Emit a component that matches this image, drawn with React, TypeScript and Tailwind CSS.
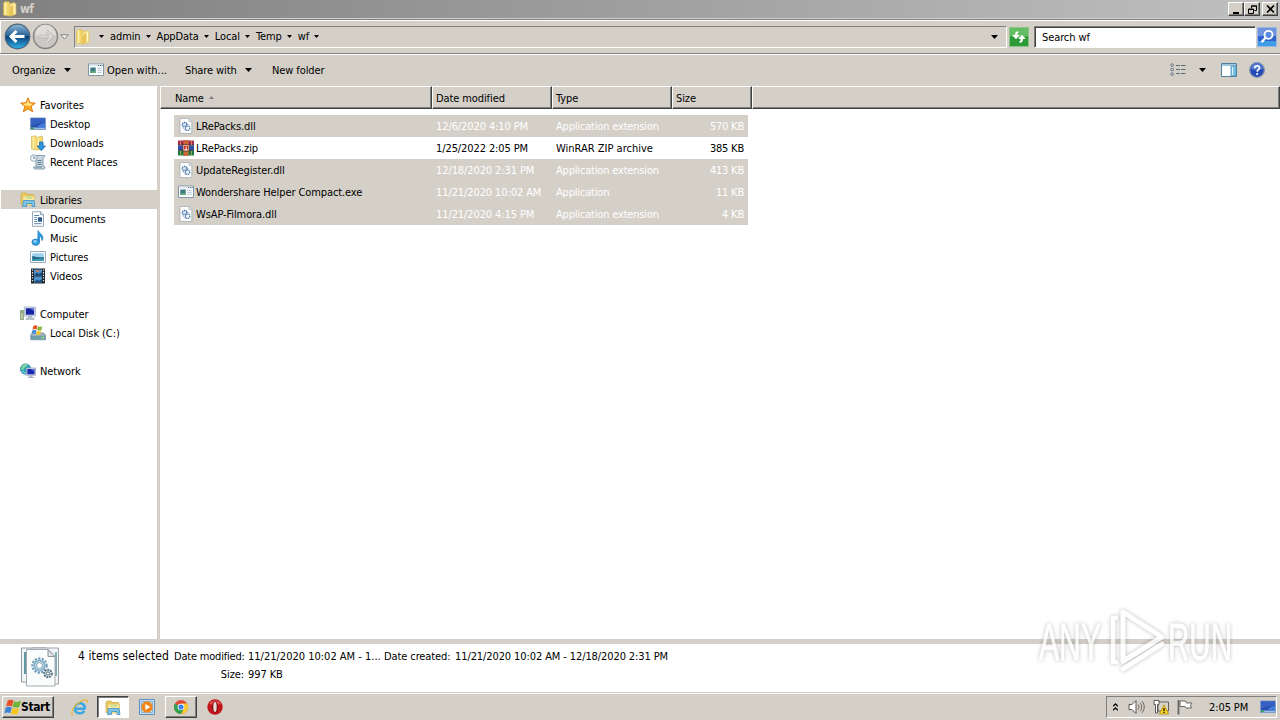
import type { ReactNode } from "react";
import clsx from "clsx";

type IconProps = { className?: string };

type FileRow = {
  name: string;
  date: string;
  type: string;
  size: string;
  icon: ReactNode;
  selected: boolean;
};

type TreeItem = {
  label: string;
  icon: ReactNode;
  root?: boolean;
  active?: boolean;
};

const RAISED =
  "border border-t-white border-l-white border-r-[#404040] border-b-[#404040] shadow-[inset_-1px_-1px_0_#808080]";

/* ---------- Icons ---------- */

function Svg({ className = "size-4", box = "0 0 16 16", children }: IconProps & { box?: string; children: ReactNode }) {
  return (
    <svg className={clsx("block shrink-0", className)} viewBox={box} fill="none">
      {children}
    </svg>
  );
}

function Caret({ className = "h-1 w-[7px]" }: IconProps) {
  return (
    <Svg className={className} box="0 0 7 4">
      <path d="M0 0h7L3.5 4z" fill="#000" />
    </Svg>
  );
}

function FolderIcon({ className }: IconProps) {
  return (
    <Svg className={className}>
      <path d="M1.5 2 3 .8h4l1 1.5V14l-1 1-5.5-1z" fill="#f1d66c" stroke="#d9b54c" strokeWidth=".6" />
      <path d="M3.5 1.5v12.8" stroke="#fff3b4" strokeWidth="1.6" />
      <path d="m7 3.5 4.5-2 2.5 1.2v10.5L8 15.3z" fill="#f8e392" stroke="#dcb850" strokeWidth=".6" />
      <path d="m8 15 .2-9 3-2v9z" fill="#e7c455" />
      <path d="M12.5 3v10" stroke="#fff8cd" />
    </Svg>
  );
}

function StarIcon() {
  return (
    <Svg>
      <path
        d="m8 .8 2 4.9 5.3.4-4.1 3.3 1.5 5.4L8 11.9l-4.7 2.9 1.5-5.4L.7 6.1 6 5.7z"
        fill="#fbab22"
        stroke="#df7d18"
        strokeLinejoin="round"
      />
      <path d="m8 2.8 1.2 3.6 3.8.4-3 2.2L8 8.5 4 8.2 3 6.8l3.8-.4z" fill="#ffe685" />
    </Svg>
  );
}

function DesktopIcon() {
  return (
    <Svg>
      <path d="M.5 2h15v11.5H.5z" fill="#274fae" stroke="#7e9cc4" />
      <path d="M1 2.5h14v4C10 6 6 8 1 10z" fill="#3561c4" />
      <path d="M1 11.5h14V13H1z" fill="#9fbde0" />
      <path d="M1 11.5h3V13H1z" fill="#36a552" />
      <path d="M8 10c2-2 4-3 7-3v4.5H8z" fill="#3f7bd8" />
    </Svg>
  );
}

function DownloadsIcon() {
  return (
    <Svg>
      <path d="M1.5 1.5 6 .8l1 1.7 5-1.5.5 1v12L7 15l-5.5-1z" fill="#f4d976" stroke="#d5b452" strokeWidth=".7" />
      <path d="M3.5 1.5v12M8.5 3v9" stroke="#fff1ae" strokeWidth="1.3" />
      <path d="M9.5 7h3.6v4H15.5l-4.2 4.7L7 11h2.5z" fill="#2b94dc" stroke="#1768ad" strokeWidth=".7" />
    </Svg>
  );
}

function RecentIcon() {
  return (
    <Svg>
      <path d="M5 1.5h9.5c.5 2-1.5 2-1.5 3.5v7l2 1c0 2-1 2-2 2H5c-1 0-1.5-1-1.5-2H6V5z" fill="#c9d7e0" stroke="#7a91a2" strokeWidth=".9" />
      <path d="M7.5 6.5h4M7.5 8.5h4M7.5 10.5h4M6 13h6" stroke="#5f7f99" />
      <circle cx="3.8" cy="4" r="3.3" fill="#eef4f7" stroke="#8499a8" strokeWidth=".8" />
      <path d="M3.8 2v2.2h2" stroke="#55768f" strokeWidth=".8" />
    </Svg>
  );
}

function LibrariesIcon({ className }: IconProps) {
  return (
    <Svg className={className}>
      <path d="M1 2.5 2 1h4l1 1.5h6.5v10H1z" fill="#eccc62" stroke="#cda741" strokeWidth=".7" />
      <path d="M3 4h11.5v9H2z" fill="#fbe89c" stroke="#d9b752" strokeWidth=".7" />
      <path d="M6 4.8h6.5v2H6z" fill="#bfe09c" />
      <path d="M3.5 8.5H14l1 6h-3v-3H6.5v3h-4z" fill="#7fc4ea" stroke="#3c8fc4" strokeWidth=".8" />
    </Svg>
  );
}

function DocumentIcon() {
  return (
    <Svg>
      <path d="M2.5.7h8l3 3v11.6h-11z" fill="#fff" stroke="#7e93a8" strokeWidth=".8" />
      <path d="M10.5.7v3h3" fill="#d5e0ea" stroke="#7e93a8" strokeWidth=".8" />
      <path d="M4.2 4.5h5M4.2 6.5h3M4.2 8.5h3M4.2 10.5h3M4.2 12.7h7.5" stroke="#5b87ad" />
      <path d="M8 6.3h4v4.4H8z" fill="#285b8d" />
    </Svg>
  );
}

function MusicIcon() {
  return (
    <Svg>
      <path d="M8 .3c.6 3 5.3 3.8 5 8-.1 1-.6 1.900-1.200 2.300.3-2.800-1.200-3.800-2.300-4.100V12H7.700z" fill="#2f9ee0" stroke="#1c74ba" strokeWidth=".6" />
      <ellipse cx="5.700" cy="12.200" rx="3.800" ry="3.100" fill="#38a4e4" stroke="#1b6eb2" strokeWidth=".7" />
      <ellipse cx="5" cy="11.300" rx="1.700" ry="1.100" fill="#a8dbf7" />
    </Svg>
  );
}

function PicturesIcon() {
  return (
    <Svg>
      <path d="M.5 2.5h15v11H.5z" fill="#fff" stroke="#8fa3b4" strokeWidth=".9" />
      <path d="M2.2 4.2h11.6v7.6H2.2z" fill="#9dd2ef" />
      <path d="M2.2 7c3 0 5 2 11.6 1v3.8H2.2z" fill="#246c86" />
      <path d="M2.2 10.5c4 0 8-1 11.6-1v2.3H2.2z" fill="#3fa0be" />
    </Svg>
  );
}

function VideosIcon() {
  return (
    <Svg>
      <path d="M1 .5h14v15H1z" fill="#1d252c" />
      <path d="M4 1.5h8v6H4zM4 8.5h8v6H4z" fill="#4a93cc" />
      <path d="m4 7.5 3-3 2 1.5L12 4v3.5zM4 14.5l3-3 2 1.5 3-2v3.5z" fill="#1c4b77" />
      <path d="M6 2.5h3v1.5H6z" fill="#df7248" />
      <path d="M2.5 1.5v13M13.5 1.5v13" stroke="#dfe6eb" strokeWidth="1.2" strokeDasharray="1.3 1.3" />
    </Svg>
  );
}

function ComputerIcon() {
  return (
    <Svg>
      <path d="M.5 4.5h3v9h-3z" fill="#b9c9a5" stroke="#77876c" strokeWidth=".7" />
      <path d="M1 6h2" stroke="#47a137" />
      <path d="M4.3 1h11.2v9H4.3z" fill="#d9e0ea" stroke="#9ba8ba" strokeWidth=".7" />
      <path d="M5.8 2.3h8.3v6.4H5.8z" fill="#1522a4" />
      <path d="M9.5 2.3h4.6v3z" fill="#5a72e1" />
      <path d="M8.5 10h3v2H14v1.5H6V12h2.5z" fill="#b6c1cd" stroke="#8693a3" strokeWidth=".4" />
    </Svg>
  );
}

function DriveIcon() {
  return (
    <Svg>
      <path d="m.7 10 2-2h11l1.8 2v4.8H.7z" fill="#a7b6c0" stroke="#6e818c" strokeWidth=".7" />
      <path d="M1 10.7h14v3.8H1z" fill="#6f9fab" />
      <path d="M11.500 12.500H14" stroke="#8bf26a" strokeWidth="1.2" />
      <path d="M3.300.9c1.500-1 3-1 4.200 0L6.700 4.600c-1-.8-2.700-.8-4.200 0z" fill="#e8562a" />
      <path d="M8 1.200c1.300.9 2.800.9 4.400 0l-1 3.700c-1.300.8-2.700.8-4.200 0z" fill="#7fb83b" />
      <path d="M2.300 5.300c1.400-.8 2.900-.8 4.200 0L5.600 9c-1-.8-2.700-.8-4.200 0z" fill="#4f8fd8" />
      <path d="M7 5.600c1.300.8 2.700.8 4.300 0l-1 3.700c-1.400.8-2.800.8-4.200 0z" fill="#f6c62e" />
    </Svg>
  );
}

function NetworkIcon() {
  return (
    <Svg>
      <circle cx="5.6" cy="6" r="5.2" fill="#2aa0b8" stroke="#237897" strokeWidth=".6" />
      <path d="M2 3c2-2 5-2.300 6-1.500C7 4 4 4 3.500 6.500c-1 1-2 0-2.600-.8z" fill="#7fd6a0" />
      <path d="M2 8.500c2 0 3 .5 3.300 2.300" stroke="#a3e6f0" />
      <path d="M6.300 5h9.200v7.300H6.300z" fill="#d9e0ea" stroke="#8b9bb4" strokeWidth=".7" />
      <path d="M7.300 6h7.200v5.300H7.300z" fill="#1726ad" />
      <path d="M10.500 6h4v2.700z" fill="#5a74e5" />
      <path d="M9.800 12.300h2.400v1.500h2v1.300H7.800v-1.300h2z" fill="#aab6c6" />
    </Svg>
  );
}

function DllIcon() {
  return (
    <Svg>
      <path d="M2 .5h9l2.800 2.800v12.200H2z" fill="#fff" stroke="#a6afb6" strokeWidth=".8" />
      <path d="M11 .5v2.800h2.800" stroke="#a6afb6" strokeWidth=".8" />
      <circle cx="6.600" cy="6.600" r="2.300" stroke="#3f6ea6" strokeWidth="1.300" strokeDasharray="1.300 .5" />
      <circle cx="6.600" cy="6.600" r=".9" stroke="#7ea2cc" strokeWidth=".6" />
      <circle cx="9.600" cy="10.200" r="2.200" stroke="#3f6ea6" strokeWidth="1.200" strokeDasharray="1.200 .5" />
      <path d="m4.500 9.500 3.500 3.500M9 5.500l2.500 2" stroke="#89a8cd" strokeWidth=".7" />
    </Svg>
  );
}

function ZipIcon() {
  return (
    <Svg>
      <path d="M0 .5h16V5H0z" fill="#a82b4c" />
      <path d="M0 5.5h16v4.700H0z" fill="#2d4fa8" />
      <path d="M0 10.700h16v4.800H0z" fill="#207a3c" />
      <path d="M0 5h16M0 10.400h16" stroke="#241f35" strokeWidth=".8" />
      <path d="M5.500 0h5v16h-5z" fill="#c9693a" />
      <path d="M5 4.500h6v6.500H5z" fill="#efe6dc" stroke="#6c351e" strokeWidth=".8" />
      <path d="M6.500 9.500V6h1.300v3M9.500 9.500V6H8" stroke="#d02c1f" />
      <path d="M2.500 1v4M13.500 1v4M2.500 11v4M13.500 11v4" stroke="#e9c56a" strokeWidth=".6" />
    </Svg>
  );
}

function AppIcon({ className }: IconProps) {
  return (
    <Svg className={className}>
      <path d="M.5 2h15v11.500H.5z" fill="#fff" stroke="#8197a8" />
      <path d="M1 2.500h14v1.900H1z" fill="#dce6ed" />
      <path d="M10 3.500h1M12 3.500h1M13.700 3.500h1" stroke="#567" />
      <path d="M2.300 5.500h5.400V11H2.300z" fill="#3f7b82" />
      <path d="M2.300 9.200h5.400V11H2.300z" fill="#63ae7d" />
      <path d="M9.300 6.300h4.500M9.300 8.300h4.500M9.300 10.300h4.500" stroke="#b4c5d2" />
    </Svg>
  );
}

function GearFilesIcon() {
  return (
    <Svg className="h-[42px] w-[40px]" box="0 0 40 42">
      <path d="M1.500 2h25v34h-25z" fill="#f2f5f6" stroke="#8f999f" />
      <path d="M4 6h3.500v22H4z" fill="#5f97a3" />
      <path d="M12 2h26.500v36H12z" fill="#f2f5f6" stroke="#9aa3a8" />
      <path d="M35 6h2v24h-2z" fill="#83adb6" />
      <path d="M6.500 3.500H28l7 7V40H6.500z" fill="#fbfcfc" stroke="#a3abb0" />
      <path d="M28 3.500v7h7z" fill="#dde3e6" stroke="#8b959b" />
      <circle cx="19.500" cy="19.500" r="7.200" stroke="#6f9bb8" strokeWidth="2" strokeDasharray="2.200 1.400" />
      <circle cx="19.500" cy="19.500" r="5.200" fill="#dcebf3" stroke="#86afc6" strokeWidth="2" />
      <circle cx="19.500" cy="19.500" r="3" fill="#fff" stroke="#4f86a9" strokeWidth=".8" />
      <circle cx="28" cy="27.500" r="3.800" fill="#d4e3ea" stroke="#51707f" strokeWidth="2" strokeDasharray="1.800 1" />
      <circle cx="28" cy="27.500" r="1.600" fill="#fff" stroke="#51707f" />
    </Svg>
  );
}

function BackButton() {
  return (
    <Svg className="size-[27px]" box="0 0 27 27">
      <defs>
        <linearGradient id="back" x1="0" y1="0" x2="0" y2="1">
          <stop stopColor="#8fb7d6" />
          <stop offset=".48" stopColor="#246298" />
          <stop offset=".5" stopColor="#0c4079" />
          <stop offset="1" stopColor="#2fb3ec" />
        </linearGradient>
      </defs>
      <circle cx="13.500" cy="13.500" r="12.300" fill="url(#back)" stroke="#4d6479" strokeWidth="1.200" />
      <path d="M12.500 8 7 13.500l5.500 5.500M7.500 13.500h13" stroke="#fff" strokeWidth="3" />
    </Svg>
  );
}

function ForwardButton() {
  return (
    <Svg className="size-[27px]" box="0 0 27 27">
      <circle cx="13.500" cy="13.500" r="12" fill="#cbc9c6" stroke="#858380" strokeWidth="1.400" />
      <path d="M3 12a10.500 10.500 0 0 1 21 0c-6 2-14 2-21 0z" fill="#dfddda" />
      <path d="m14.500 8 5.500 5.500-5.500 5.500M19.500 13.500h-13" stroke="#b5b2ae" strokeWidth="3.400" />
      <path d="m14.500 8 5.500 5.500-5.500 5.500M19.500 13.500h-13" stroke="#dcdad7" strokeWidth="2" />
    </Svg>
  );
}

function RefreshIcon() {
  return (
    <Svg className="size-5" box="0 0 20 20">
      <path d="M.5.5h19v19H.5z" fill="#2c9a36" stroke="#8cc48b" />
      <path d="M1 1h18v8c-6 2-12 2-18 0z" fill="#63bd62" />
      <path d="M9.500 4.200C6.500 4.200 6 6 6 8H3.200L7 12.300 10.800 8H8.500c0-1.500 0-2 1-2.200z" fill="#fff" />
      <path d="M10.500 15.800c3 0 3.500-1.800 3.500-3.800h2.800L13 7.700 9.200 12h2.300c0 1.500 0 2-1 2.200z" fill="#fff" />
    </Svg>
  );
}

function SearchIcon() {
  return (
    <Svg className="size-5" box="0 0 20 20">
      <path d="M.5.5h19v19H.5z" fill="#2f62cd" stroke="#9db6e4" />
      <path d="M1 1h18v8H1z" fill="#6f93de" />
      <path d="M1 14h18v5H1z" fill="#3f9de6" />
      <circle cx="11.500" cy="7.800" r="4" fill="#5b8be0" stroke="#fff" strokeWidth="1.800" />
      <path d="m8.600 10.800-4 4.400" stroke="#fff" strokeWidth="2.400" />
    </Svg>
  );
}

function ViewIcon() {
  return (
    <Svg>
      <path d="M1 2h2.200v2.200H1zM1 6.500h2.200v2.200H1zM1 11h2.200v2.200H1z" fill="#fff" stroke="#6d767e" />
      <path d="M6 3.500h4M11 3.500h4.500M6 7.500h4M11 7.500h4.500M6 11.500h4M11 11.500h4.500" stroke="#5f6b76" />
    </Svg>
  );
}

function PreviewPaneIcon() {
  return (
    <Svg>
      <path d="M.5 1.500h15v13H.5z" fill="#fff" stroke="#4f7fa1" />
      <path d="M1 2h14v2H1z" fill="#9fc6dc" />
      <path d="M10 4h5v10h-5z" fill="#7cc3e4" stroke="#4f8fb3" strokeWidth=".8" />
      <path d="M11.500 5v8" stroke="#d9f1fb" />
    </Svg>
  );
}

function HelpIcon() {
  return (
    <Svg>
      <circle cx="8" cy="8" r="7.300" fill="#2349b5" stroke="#7e8fae" strokeWidth="1.300" />
      <path d="M2 7a6 6 0 0 1 12 0c-4 1.500-8 1.500-12 0z" fill="#5378d2" />
      <path d="M5.700 6.200c0-3 4.800-3 4.800-.2 0 1.700-2.300 1.700-2.300 3.700" stroke="#fff" strokeWidth="1.700" />
      <circle cx="8.200" cy="12" r="1.100" fill="#fff" />
    </Svg>
  );
}

function WindowsFlag() {
  return (
    <Svg className="size-[17px]">
      <path d="M3.500 1.500c2-1.200 4-1 5.500 0L7.500 7C6 6 4 6 2 7z" fill="#e65127" />
      <path d="M9.500 2c1.800 1 4 1 6.500-.3L14.500 7.200c-2 1.100-4.200 1.100-6.300.2z" fill="#6fb536" />
      <path d="M1.700 8c2-1 4-1 5.600 0L5.900 13.400c-1.500-1-3.700-1-5.600 0z" fill="#3e83d6" />
      <path d="M8 8.400c2 1 4.200 1 6.300-.1l-1.500 5.500c-2 1.100-4.300 1.100-6.200.1z" fill="#f8c520" />
    </Svg>
  );
}

function IeIcon() {
  return (
    <Svg className="size-[17px]">
      <path
        d="M13.300 9.200H3.600c0 4.800 7 5.600 8.800 1.800M13.200 9.200c.3-6.700-9.400-7-9.600 0"
        stroke="#3ba7e4"
        strokeWidth="2.400"
      />
      <path d="M1.500 15.200C-.7 12.500 3 5.500 8.500 2.500c3.500-2 6.700-2.300 6.900-.8.1.7 0 1.300-.4 2" stroke="#e9b93a" strokeWidth="1.200" />
    </Svg>
  );
}

function MediaIcon() {
  return (
    <Svg className="size-4">
      <path d="M.5.5h15v15H.5z" fill="#c5dcf0" stroke="#5b91c0" />
      <path d="M2.500 2.500h11v11h-11z" stroke="#8bb4d8" />
      <circle cx="8" cy="8" r="5.700" fill="#f1861b" />
      <path d="m6.300 5 5 3-5 3z" fill="#fff" />
    </Svg>
  );
}

function ChromeIcon() {
  return (
    <Svg className="size-[14px]">
      <circle cx="8" cy="8" r="8" fill="#e24a3b" />
      <path d="M8 8 1.100 4A8 8 0 0 0 8 16l3.500-6z" fill="#2ea34f" />
      <path d="M8 16a8 8 0 0 0 7-12H8l3.500 6z" fill="#f9cb2d" />
      <circle cx="8" cy="8" r="3.800" fill="#fff" />
      <circle cx="8" cy="8" r="2.900" fill="#3f7fe8" />
    </Svg>
  );
}

function OperaIcon() {
  return (
    <Svg className="size-4">
      <circle cx="8" cy="8" r="7.700" fill="#c3161c" />
      <path d="M2 5a7 7 0 0 1 12 0c-3 1-8 1-12 0z" fill="#dd5250" />
      <ellipse cx="8" cy="8" rx="3" ry="5.800" fill="#7e0b10" />
      <ellipse cx="8" cy="8" rx="1.700" ry="5" fill="#e9dcd6" />
    </Svg>
  );
}

function SpeakerIcon() {
  return (
    <Svg className="h-4 w-[17px]" box="0 0 17 16">
      <path d="M1 5.500h3l4-4v13l-4-4H1z" fill="#fff" stroke="#57534f" />
      <path d="M10 5.500c1.300 1.500 1.300 3.500 0 5M12 3.800c2.300 2.500 2.300 6 0 8.500M14 2.200c3 3.500 3 8 0 11.500" stroke="#6b6762" />
    </Svg>
  );
}

function NetTrayIcon() {
  return (
    <Svg className="size-4">
      <path d="M5 3h10.500v9H5z" fill="#d8d4ce" stroke="#625e59" />
      <path d="M1 1.500h5v4H4.500V14h-2V5.500H1z" fill="#fff" stroke="#4b4844" strokeWidth=".9" />
      <path d="M11 5.800 15.700 15H6.300z" fill="#fbd326" stroke="#b28d0e" strokeWidth=".8" />
      <path d="M11 9v3M11 12.800v1.200" stroke="#000" strokeWidth="1.200" />
    </Svg>
  );
}

function FlagIcon() {
  return (
    <Svg className="size-4">
      <path d="M1.500 1v14.500" stroke="#66625d" strokeWidth="1.800" />
      <path d="M3 2h5.500l1 2H15l-1.500 2.500L14.500 9H9L8 7.500H3z" fill="#fff" stroke="#6b6762" />
    </Svg>
  );
}

/* ---------- Data ---------- */

const PATH = ["admin", "AppData", "Local", "Temp", "wf"];

const TREE: TreeItem[][] = [
  [
    { label: "Favorites", icon: <StarIcon />, root: true },
    { label: "Desktop", icon: <DesktopIcon /> },
    { label: "Downloads", icon: <DownloadsIcon /> },
    { label: "Recent Places", icon: <RecentIcon /> },
  ],
  [
    { label: "Libraries", icon: <LibrariesIcon />, root: true, active: true },
    { label: "Documents", icon: <DocumentIcon /> },
    { label: "Music", icon: <MusicIcon /> },
    { label: "Pictures", icon: <PicturesIcon /> },
    { label: "Videos", icon: <VideosIcon /> },
  ],
  [
    { label: "Computer", icon: <ComputerIcon />, root: true },
    { label: "Local Disk (C:)", icon: <DriveIcon /> },
  ],
  [{ label: "Network", icon: <NetworkIcon />, root: true }],
];

const FILES: FileRow[] = [
  { name: "LRePacks.dll", date: "12/6/2020 4:10 PM", type: "Application extension", size: "570 KB", icon: <DllIcon />, selected: true },
  { name: "LRePacks.zip", date: "1/25/2022 2:05 PM", type: "WinRAR ZIP archive", size: "385 KB", icon: <ZipIcon />, selected: false },
  { name: "UpdateRegister.dll", date: "12/18/2020 2:31 PM", type: "Application extension", size: "413 KB", icon: <DllIcon />, selected: true },
  { name: "Wondershare Helper Compact.exe", date: "11/21/2020 10:02 AM", type: "Application", size: "11 KB", icon: <AppIcon />, selected: true },
  { name: "WsAP-Filmora.dll", date: "11/21/2020 4:15 PM", type: "Application extension", size: "4 KB", icon: <DllIcon />, selected: true },
];

/* ---------- Sections ---------- */

function TitleBar() {
  const button = clsx("flex h-[14px] w-4 items-center justify-center bg-[#d4d0c8]", RAISED);
  return (
    <div className="flex h-[18px] items-center bg-linear-to-r from-[#808080] to-[#c0c0c0] px-[2px]">
      <FolderIcon className="size-4" />
      <span className="ml-[2px] text-[12px] font-bold tracking-[-0.7px] text-[#d4d0c8]">wf</span>
      <div className="ml-auto flex">
        <div className={button}>
          <Svg className="size-[9px]" box="0 0 9 9">
            <path d="M1 7h6v2H1z" fill="#000" />
          </Svg>
        </div>
        <div className={button}>
          <Svg className="size-[9px]" box="0 0 9 9">
            <path d="M3.500 3V1h5v4.500H6.500M3 1h6M.5 4h5v4.500h-5zM0 4.500h6" stroke="#000" />
          </Svg>
        </div>
        <div className={clsx(button, "ml-[2px]")}>
          <Svg className="h-[8px] w-[9px]" box="0 0 9 8">
            <path d="m1 .5 7 7M8 .5l-7 7" stroke="#000" strokeWidth="1.600" />
          </Svg>
        </div>
      </div>
    </div>
  );
}

function AddressBar() {
  return (
    <div className="flex h-[35px] items-center border-t border-b border-t-[#808080] border-b-[#808080] pl-1 shadow-[inset_1px_1px_0_#fff,0_1px_0_#fff]">
      <BackButton />
      <div className="ml-[1px]">
        <ForwardButton />
      </div>
      <Svg className="ml-[1px] h-[6px] w-[9px]" box="0 0 8 5">
        <path d="M.5.5h7L4 4.300z" fill="#eee" stroke="#7c7974" strokeWidth=".8" />
      </Svg>
      <div className="ml-[5px] flex h-[22px] w-[933px] items-center border border-t-[#808080] border-r-white border-b-white border-l-[#808080]">
        <FolderIcon className="h-[18px] w-[16px]" />
        {/* breadcrumb */}
        <div className="flex items-center pl-2">
          <Caret className="h-[3px] w-[5px]" />
          {PATH.map((part) => (
            <div key={part} className="flex items-center">
              <span className="mr-[5px] ml-[6px]">{part}</span>
              <Caret className="h-[3px] w-[5px]" />
            </div>
          ))}
        </div>
        <div className="mr-2 ml-auto">
          <Caret />
        </div>
      </div>
      <div className="ml-[2px]">
        <RefreshIcon />
      </div>
      <div className="ml-[5px] flex h-[22px] w-[222px] items-center border border-t-[#808080] border-r-white border-b-white border-l-[#808080] bg-white pl-[7px] shadow-[inset_1px_1px_0_#404040]">
        <span className="pt-[2px]">Search wf</span>
      </div>
      <div className="ml-[1px]">
        <SearchIcon />
      </div>
    </div>
  );
}

function Toolbar() {
  return (
    <div className="flex h-8 items-center pr-[15px] pl-3">
      <span className="w-[45px] pt-[2px]">Organize</span>
      <div className="ml-[7px]">
        <Caret />
      </div>
      <AppIcon className="ml-[17px] size-4" />
      <span className="ml-[3px] w-[60px] pt-[2px] tracking-normal">Open with...</span>
      <span className="ml-[18px] w-[53px] pt-[2px]">Share with</span>
      <div className="ml-[7px]">
        <Caret />
      </div>
      <span className="ml-5 pt-[2px]">New folder</span>
      <div className="ml-auto flex items-center">
        <ViewIcon />
        <div className="ml-[13px]">
          <Caret />
        </div>
        <div className="ml-[15px]">
          <PreviewPaneIcon />
        </div>
        <div className="ml-3">
          <HelpIcon />
        </div>
      </div>
    </div>
  );
}

function Sidebar() {
  return (
    <nav className="flex w-[157px] shrink-0 flex-col gap-[19px] bg-white pt-[9px]">
      {TREE.map((group) => (
        <div key={group[0].label}>
          {group.map((item) => (
            <div
              key={item.label}
              className={clsx(
                "ml-px flex h-[19px] items-center gap-1",
                item.root ? "pl-[19px]" : "pl-[29px]",
                item.active && "bg-[#d4d0c8]",
              )}
            >
              {item.icon}
              <span className="pt-[2px]">{item.label}</span>
            </div>
          ))}
        </div>
      ))}
    </nav>
  );
}

function FileList() {
  const cell = clsx("flex h-full items-center pt-[2px]", RAISED);
  return (
    <main className="flex-1 bg-white">
      <div className="flex h-[23px] bg-[#d4d0c8]">
        <div className={clsx(cell, "w-[272px] pl-[14px]")}>
          Name
          <Svg className="mb-[3px] ml-[5px] h-[3px] w-[5px]" box="0 0 5 3">
            <path d="M0 3h5L2.500 0z" fill="#808080" />
          </Svg>
        </div>
        <div className={clsx(cell, "w-[120px] pl-[3px]")}>Date modified</div>
        <div className={clsx(cell, "w-[120px] pl-[3px]")}>Type</div>
        <div className={clsx(cell, "w-[80px] pl-[3px]")}>Size</div>
        <div className={clsx(cell, "flex-1")} />
      </div>
      <div className="pt-[6px] pl-[14px]">
        {FILES.map((file) => (
          <div
            key={file.name}
            className={clsx("flex h-[22px] w-[574px] items-center", file.selected && "bg-[#d4d0c8]")}
          >
            <div className="flex w-[262px] items-center gap-[2px] pl-1">
              {file.icon}
              <span className="pt-[2px]">{file.name}</span>
            </div>
            <div className={clsx("flex flex-1 pt-[2px]", file.selected && "text-white")}>
              <span className="w-[120px]">{file.date}</span>
              <span className={clsx("w-[120px]", file.selected ? "tracking-[-0.18px]" : "tracking-normal")}>
                {file.type}
              </span>
              <span className="flex-1 pr-[4px] text-right tracking-[-0.2px]">{file.size}</span>
            </div>
          </div>
        ))}
      </div>
    </main>
  );
}

function DetailsPane() {
  return (
    <div className="flex h-[48px] bg-white pl-[20px]">
      <div className="pt-[2px]">
        <GearFilesIcon />
      </div>
      <span className="ml-[18px] w-[96px] pt-[5px] text-[12px] tracking-[0.1px]">4 items selected</span>
      <div className="flex flex-col gap-1 pt-[6px]">
        <div className="flex">
          <span className="w-[74px] tracking-[-0.2px]">Date modified:</span>
          <span className="w-[136px] tracking-normal">11/21/2020 10:02 AM - 1...</span>
          <span className="w-[71px]">Date created:</span>
          <span>11/21/2020 10:02 AM - 12/18/2020 2:31 PM</span>
        </div>
        <div className="flex">
          <span className="w-[70px] text-right">Size:</span>
          <span className="ml-1">997 KB</span>
        </div>
      </div>
    </div>
  );
}

function Taskbar() {
  return (
    <footer className="flex h-[27px] items-center border-t border-white pr-[3px] pl-[2px]">
      <div className={clsx("flex h-[22px] w-[52px] items-center pl-[1px]", RAISED)}>
        <WindowsFlag />
        <span className="text-[12px] font-bold tracking-[-0.4px]">Start</span>
      </div>
      <div className="ml-[17px]">
        <IeIcon />
      </div>
      <div className="ml-[9px] flex h-[22px] w-8 items-center justify-center border border-t-[#404040] border-r-white border-b-white border-l-[#404040] bg-white pt-[2px] shadow-[inset_1px_1px_0_#808080]">
        <LibrariesIcon className="size-4" />
      </div>
      <div className="ml-[10px]">
        <MediaIcon />
      </div>
      <div className={clsx("ml-[10px] flex h-[22px] w-8 items-center justify-center", RAISED)}>
        <ChromeIcon />
      </div>
      <div className="ml-[10px]">
        <OperaIcon />
      </div>
      {/* tray */}
      <div className="ml-auto flex h-[22px] w-[171px] items-center border border-t-[#808080] border-r-white border-b-white border-l-[#808080] pl-[6px]">
        <Svg className="h-2 w-[5px]" box="0 0 5 8">
          <path d="M0 3.300 2.500 1 5 3.300M0 7.300 2.500 5 5 7.300" stroke="#000" strokeWidth="1.300" />
        </Svg>
        <div className="ml-[10px] flex gap-2">
          <SpeakerIcon />
          <NetTrayIcon />
          <FlagIcon />
        </div>
        <span className="ml-4 pt-[1px]">2:05 PM</span>
        <div className="ml-auto">
          <DesktopIcon />
        </div>
      </div>
    </footer>
  );
}

function Watermark() {
  return (
    <svg
      className="absolute top-[600px] left-[1030px] h-[80px] w-[220px] overflow-visible opacity-75 drop-shadow-[0_0_2px_rgba(0,0,0,0.35)]"
      viewBox="0 0 220 80"
      fill="none"
    >
      <g
        fill="#fff"
        stroke="#fff"
        strokeWidth=".8"
        fontFamily="Liberation Sans Narrow, Liberation Sans, sans-serif"
        fontSize="52"
        letterSpacing="0"
      >
        <text x="9" y="60" textLength="62" lengthAdjust="spacingAndGlyphs">
          ANY
        </text>
        <text x="138" y="60" textLength="64" lengthAdjust="spacingAndGlyphs">
          RUN
        </text>
      </g>
      <g stroke="#fff" strokeLinejoin="round" strokeLinecap="round">
        <path d="M93 12 132 37 93 61z" strokeWidth="5" />
        <path d="M86 18h-3v44h3" strokeWidth="4.500" />
        <path d="m93 69 39-25" strokeWidth="5" />
      </g>
    </svg>
  );
}

export default function App() {
  return (
    <div className="relative flex h-[720px] w-[1280px] flex-col overflow-hidden bg-[#d4d0c8] font-['Tahoma','DejaVu_Sans_Condensed','DejaVu_Sans',sans-serif] text-[11px] leading-[14px] tracking-[-0.1px] whitespace-nowrap text-black">
      <TitleBar />
      <div className="h-px bg-[#d4d0c8]" />
      <AddressBar />
      <Toolbar />
      <div className="flex flex-1">
        <Sidebar />
        <div className="w-[3px] bg-[#d4d0c8]" />
        <FileList />
      </div>
      <div className="h-[5px] bg-[#d4d0c8]" />
      <DetailsPane />
      <div className="h-px bg-[#d4d0c8]" />
      <Taskbar />
      <Watermark />
    </div>
  );
}
